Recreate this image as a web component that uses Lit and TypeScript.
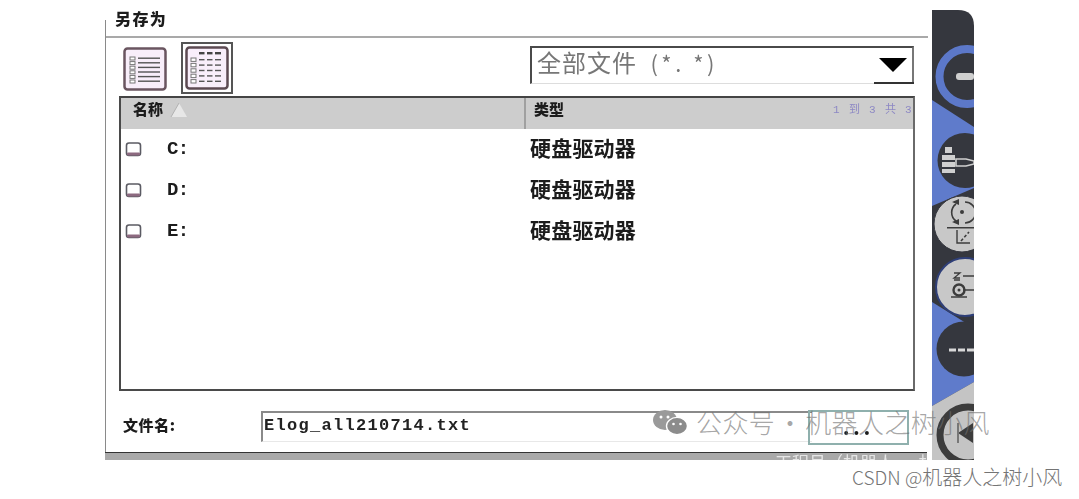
import { LitElement, html, css, svg } from "lit";
import { customElement } from "lit/decorators.js";

const CJK = `"Noto Sans CJK SC", "Liberation Sans", sans-serif`;
const MONO = `"Liberation Mono", "Noto Sans CJK SC", monospace`;

@customElement("app-root")
export class AppRoot extends LitElement {
  static styles = css`
    :host { display: block; width: 1079px; height: 499px; position: relative; overflow: hidden; background: #fff; font-family: ${css([CJK] as any)}; color: #1c1c1c; }
    .page { display: flex; padding-left: 105px; padding-top: 10px; align-items: flex-start; filter: blur(0.4px); }
    .dialog { width: 823px; height: 450px; display: flex; flex-direction: column; box-sizing: border-box; position: relative; }
    .edge { position: absolute; left: 0; top: 10px; bottom: 0; width: 1px; background: #8a8a8a; }
    .title { height: 28px; box-sizing: border-box; padding: 0 0 0 10px; border-bottom: 2px solid #a9a9a9; font-size: 16px; font-weight: 900; line-height: 16px; letter-spacing: 1.4px; }
    .tools { height: 58px; box-sizing: border-box; padding: 3px 0 0 18px; display: flex; align-items: center; position: relative; }
    .views { display: flex; align-items: center; gap: 14px; }
    .vbtn { display: block; }
    .sel { border: 2px solid #555; box-sizing: border-box; padding: 2px; width: 52px; height: 52px; margin-top: -2px; }
    .select { position: absolute; left: 425px; top: 8px; width: 384px; height: 38px; box-sizing: border-box; border: 2px solid #4a4a4a; border-right-color: #777; border-bottom: 1px solid #ddd; font-size: 24px; line-height: 27px; color: #777; padding-left: 5px; white-space: pre; letter-spacing: 1px; }
    .pat { margin-left: 5px; font-size: 22px; letter-spacing: 3.5px; }
    .corner { position: absolute; right: -2px; bottom: -1px; width: 40px; height: 2px; background: #333; }
    .arrow { position: absolute; right: 5px; top: 10px; width: 0; height: 0; border-left: 14px solid transparent; border-right: 14px solid transparent; border-top: 14px solid #000; }
    .table { margin-left: 14px; width: 796px; height: 295px; box-sizing: border-box; border: 2px solid #4a4a4a; border-top-color: #444; border-right-color: #6a6a6a; display: flex; flex-direction: column; }
    .thead { height: 31px; background: #cdcdcd; display: grid; grid-template-columns: 405px 1fr; font-weight: 900; font-size: 15px; }
    .th { display: flex; align-items: center; box-sizing: border-box; padding-bottom: 11px; height: 31px; }
    .th.a { padding-left: 12px; gap: 7px; border-right: 2px solid #a0a0a0; }
    .th.b { padding-left: 8px; justify-content: space-between; }
    .tri { opacity: 0.8; margin-top: 3px; }
    .count { font-family: ${css([MONO] as any)}; font-size: 11px; font-weight: 400; color: #8d88c4; letter-spacing: 1.3px; white-space: nowrap; }
    .row { height: 41px; display: grid; grid-template-columns: 46px 363px 1fr; align-items: center; font-weight: 700; flex: none; position: relative; top: -1px; }
    .hd { margin: 2px 0 0 4px; display: block; }
    .drive { font-family: ${css([MONO] as any)}; font-size: 19px; letter-spacing: -0.6px; padding-top: 1px; }
    .kind { font-size: 21px; letter-spacing: 0.2px; padding-bottom: 4px; }
    .name { height: 61px; box-sizing: border-box; padding: 10px 0 0 18px; display: flex; align-items: center; }
    .label { font-size: 15px; font-weight: 900; width: 138px; letter-spacing: 0.6px; margin-top: -5px; }
    .input { width: 551px; height: 31px; box-sizing: border-box; border-top: 2px solid #8a8a8a; border-left: 2px solid #8a8a8a; border-bottom: 1px solid #e8e8e8; font-family: ${css([MONO] as any)}; font-weight: 700; font-size: 17px; letter-spacing: 1.3px; line-height: 25px; padding-left: 1px; white-space: nowrap; color: #222; }
    .more { width: 101px; height: 35px; box-sizing: border-box; border: 2px solid #8fb0ad; margin: 1px 0 0 -4px; text-align: center; font-weight: 900; font-size: 18px; line-height: 30px; letter-spacing: 4px; }
    .status { height: 8px; position: absolute; left: 0; right: 1px; bottom: 0; background: #a9a9a9; border-top: 1px solid #333; overflow: hidden; color: #e6e6e6; font-size: 17px; line-height: 18px; padding-left: 670px; white-space: nowrap; box-sizing: border-box; }
    .rail { display: block; margin-left: 4px; flex: none; }
    .wm { position: absolute; left: 652px; top: 405px; display: flex; align-items: center; gap: 8px; font-size: 26px; font-weight: 300; color: rgba(110,110,110,0.62); white-space: nowrap; line-height: 34px; letter-spacing: 0.4px; pointer-events: none; }
    .dot { display: inline-block; width: 30px; text-align: center; }
    .csdn { position: absolute; left: 852px; top: 465px; font-size: 20px; font-weight: 300; line-height: 24px; color: #747474; white-space: nowrap; }
    .lat { font-size: 19px; }
  `;

  listIcon() {
    const lines = [0, 1, 2, 3, 4, 5];
    return html`<svg class="vbtn" width="44" height="44" viewBox="0 0 44 44">
      <rect x="1.5" y="1.5" width="41" height="41" rx="3" fill="#f8eefa" stroke="#6a5560" stroke-width="2.5"/>
      ${lines.map((i) => svg`<rect x="7" y="${10 + i * 4.6}" width="5" height="3" fill="#fff" stroke="#777" stroke-width="1"/>
        <rect x="15" y="${10.5 + i * 4.6}" width="22" height="1.4" fill="#555"/>`)}
    </svg>`;
  }

  gridIcon() {
    const rows = [0, 1, 2, 3, 4];
    return html`<div class="sel"><svg class="vbtn" width="44" height="44" viewBox="0 0 44 44">
      <rect x="1.5" y="1.5" width="41" height="41" rx="3" fill="#f8eefa" stroke="#5c4a52" stroke-width="2.5"/>
      <rect x="14" y="6" width="5.5" height="2.4" fill="#444"/><rect x="22" y="6" width="5.5" height="2.4" fill="#444"/><rect x="30" y="6" width="6" height="2.4" fill="#444"/>
      ${rows.map((i) => svg`<rect x="6" y="${12 + i * 5.4}" width="5" height="3.4" fill="#fff" stroke="#777" stroke-width="1"/>
        <rect x="14" y="${13 + i * 5.4}" width="5.5" height="1.4" fill="#555"/><rect x="22" y="${13 + i * 5.4}" width="5.5" height="1.4" fill="#555"/><rect x="30" y="${13 + i * 5.4}" width="6" height="1.4" fill="#555"/>`)}
    </svg></div>`;
  }

  hdd() {
    return html`<svg class="hd" width="17" height="17" viewBox="0 0 17 17">
      <rect x="1.5" y="2" width="14" height="12.5" rx="2.5" fill="#fff" stroke="#5b5b63" stroke-width="1.6"/>
      <rect x="2" y="11.5" width="13" height="3" rx="1" fill="#8d6a80"/>
    </svg>`;
  }

  rail() {
    const blue = "#5f7bcb", dark = "#35373e", grey = "#c8c8c8", ink = "#3c3c3c";
    return html`<svg class="rail" width="42" height="450" viewBox="0 0 42 450">
      <defs><clipPath id="rc"><path d="M0 0 H26 Q42 0 42 16 V450 H0 Z"/></clipPath></defs>
      <g clip-path="url(#rc)">
        <rect width="42" height="450" fill="${dark}"/>
        <path d="M0 90 L42 117 V178 L0 196 Z" fill="${blue}"/>
        <path d="M0 292 L42 318 V372 L0 396 Z" fill="${blue}"/>
        <path d="M0 396 L42 372 V450 H0 Z" fill="#c4c4c4"/>

        <circle cx="35" cy="66.5" r="27.5" fill="none" stroke="#5c78c9" stroke-width="8"/>
        <rect x="24" y="63" width="18" height="7" rx="3" fill="#cfcfcf"/>

        <circle cx="33" cy="150.5" r="27.5" fill="${dark}"/>
        <rect x="13" y="137" width="7" height="6" fill="#cfcfcf"/>
        <rect x="10" y="145" width="13" height="5" fill="#cfcfcf"/>
        <rect x="10" y="152" width="13" height="5" fill="#cfcfcf"/>
        <rect x="10" y="159" width="13" height="4" fill="#cfcfcf"/>
        <path d="M24 149 H34 L42 151 V154 L34 156 H24 Z" fill="none" stroke="#cfcfcf" stroke-width="1.6"/>

        <circle cx="30" cy="214" r="28" fill="${grey}" stroke="${dark}" stroke-width="1"/>
        <path d="M24 194 A10.5 10.5 0 0 0 24 211 M33 192 A10.5 10.5 0 0 1 33 213" fill="none" stroke="${ink}" stroke-width="1.6"/>
        <path d="M20 192 L27 189 V195 Z M20 212 L27 209 V215 Z" fill="${ink}"/>
        <circle cx="30" cy="202" r="2" fill="${ink}"/>
        <rect x="15" y="217" width="27" height="1.5" fill="${ink}"/>
        <path d="M25 220 V233 H38" fill="none" stroke="${ink}" stroke-width="1.4"/>
        <path d="M29 231 L37 222" fill="none" stroke="${ink}" stroke-width="1.6" stroke-dasharray="3 2"/>

        <circle cx="33" cy="277" r="29" fill="${grey}" stroke="#2f3f78" stroke-width="2"/>
        <path d="M22 263 h6 l-6 5 h6 M22 270 h6" stroke="${ink}" stroke-width="1.3" fill="none"/>
        <path d="M31 266 H42 M31 280 H42" stroke="${ink}" stroke-width="1.3" fill="none"/>
        <circle cx="27" cy="280" r="5.5" fill="none" stroke="${ink}" stroke-width="2.4"/>
        <circle cx="27" cy="280" r="1.5" fill="${ink}"/>
        <path d="M19 287 H35" stroke="${ink}" stroke-width="1.6"/>

        <circle cx="32" cy="339" r="27.5" fill="${dark}"/>
        <path d="M17 340 H42" stroke="#d8d8d8" stroke-width="3" stroke-dasharray="7 2"/>

        <circle cx="36" cy="425" r="28" fill="none" stroke="${ink}" stroke-width="7"/>
        <path d="M26 423 L41 413 V433 Z" fill="${ink}"/>
        <rect x="25" y="413" width="2" height="20" fill="#777"/>
      </g>
    </svg>`;
  }

  render() {
    const rows = ["C:", "D:", "E:"];
    return html`
      <div class="page">
        <div class="dialog">
          <div class="edge"></div>
          <div class="title">另存为</div>
          <div class="tools">
            <div class="views">${this.listIcon()}${this.gridIcon()}</div>
            <div class="select">全部文件<span class="pat"> (*. *)</span><div class="arrow"></div><div class="corner"></div></div>
          </div>
          <div class="table">
            <div class="thead">
              <div class="th a">名称
                <svg class="tri" width="18" height="16" viewBox="0 0 18 16"><path d="M9 1 L17 15 H1 Z" fill="#eee"/><path d="M9 1 L1 15" stroke="#aaa" stroke-width="1"/></svg>
              </div>
              <div class="th b">类型<span class="count">1 到 3 共 3</span></div>
            </div>
            ${rows.map((r) => html`<div class="row">${this.hdd()}<span class="drive">${r}</span><span class="kind">硬盘驱动器</span></div>`)}
          </div>
          <div class="name">
            <div class="label">文件名:</div>
            <div class="input">Elog_all210714.txt</div>
            <div class="more">...</div>
          </div>
          <div class="status">工程号（机器人 · 机</div>
        </div>
        ${this.rail()}
      </div>
      <div class="wm">
        <svg width="36" height="28" viewBox="0 0 36 28"><ellipse cx="13" cy="12" rx="12" ry="10" fill="#9a9a9a"/><ellipse cx="25" cy="18" rx="10.5" ry="8.6" fill="#8c8c8c" stroke="#fff" stroke-width="1.4"/><circle cx="9" cy="9" r="1.5" fill="#fff"/><circle cx="16" cy="9" r="1.5" fill="#fff"/><circle cx="21.5" cy="16" r="1.3" fill="#fff"/><circle cx="28.5" cy="16" r="1.3" fill="#fff"/></svg>
        <span>公众号<span class="dot">·</span>机器人之树小风</span>
      </div>
      <div class="csdn"><span class="lat">CSDN @</span>机器人之树小风</div>
    `;
  }
}
